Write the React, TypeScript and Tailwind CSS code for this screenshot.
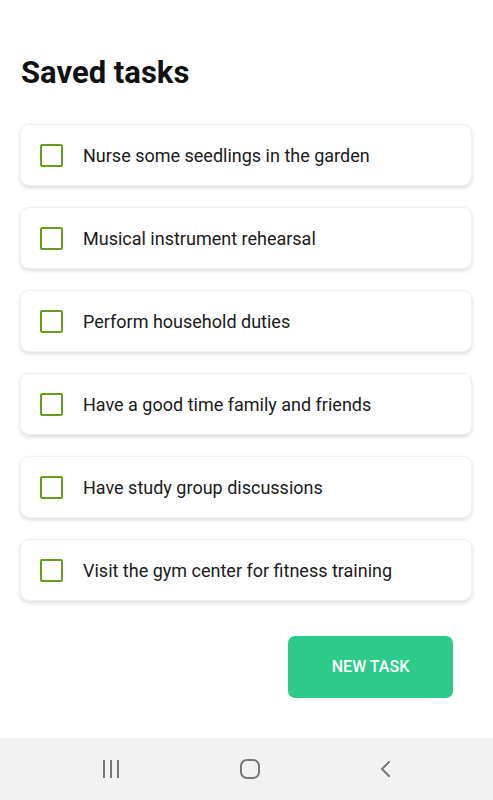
import React from 'react';

const tasks = [
  'Nurse some seedlings in the garden',
  'Musical instrument rehearsal',
  'Perform household duties',
  'Have a good time family and friends',
  'Have study group discussions',
  'Visit the gym center for fitness training',
];

const App = () => {
  return (
    <div className="w-[493px] h-[800px] bg-white flex flex-col font-['Roboto',sans-serif]">
      <div className="flex-1 flex flex-col px-[20px] pt-[53px]">
        <h1 className="text-[31px] leading-[40px] font-bold text-[#111] pl-px">Saved tasks</h1>

        {/* task list */}
        <div className="mt-[31px] flex flex-col gap-[21px]">
          {tasks.map((t) => (
            <div
              key={t}
              className="h-[62px] w-[452px] rounded-[9px] bg-white border border-[#f0f0f0] shadow-[0_2px_4px_rgba(0,0,0,0.14)] flex items-center pl-[19px]"
            >
              <div className="w-[23px] h-[23px] border-[2.5px] border-[#689c1e] rounded-[2px]" />
              <span className="ml-[20px] text-[18px] text-[#1a1a1a]">{t}</span>
            </div>
          ))}
        </div>

        <div className="flex justify-end mt-[35px] pr-[20px]">
          <button className="w-[165px] h-[62px] rounded-[7px] bg-[#2dcb8a] text-white text-[16px] font-medium">
            NEW TASK
          </button>
        </div>
      </div>

      {/* system nav bar */}
      <div className="h-[62px] bg-[#f2f2f2] flex items-center justify-center gap-[118px]">
        <svg width="20" height="20" viewBox="0 0 20 20" fill="none" stroke="#777" strokeWidth="2">
          <path d="M3 1v18M10 1v18M17 1v18" />
        </svg>
        <svg width="22" height="22" viewBox="0 0 22 22" fill="none" stroke="#777" strokeWidth="2">
          <rect x="2" y="2" width="18" height="18" rx="6" />
        </svg>
        <svg width="14" height="16" viewBox="0 0 14 16" fill="none" stroke="#777" strokeWidth="2" strokeLinecap="round" strokeLinejoin="round">
          <path d="M10 1L3 8l7 7" />
        </svg>
      </div>
    </div>
  );
};

export default App;
